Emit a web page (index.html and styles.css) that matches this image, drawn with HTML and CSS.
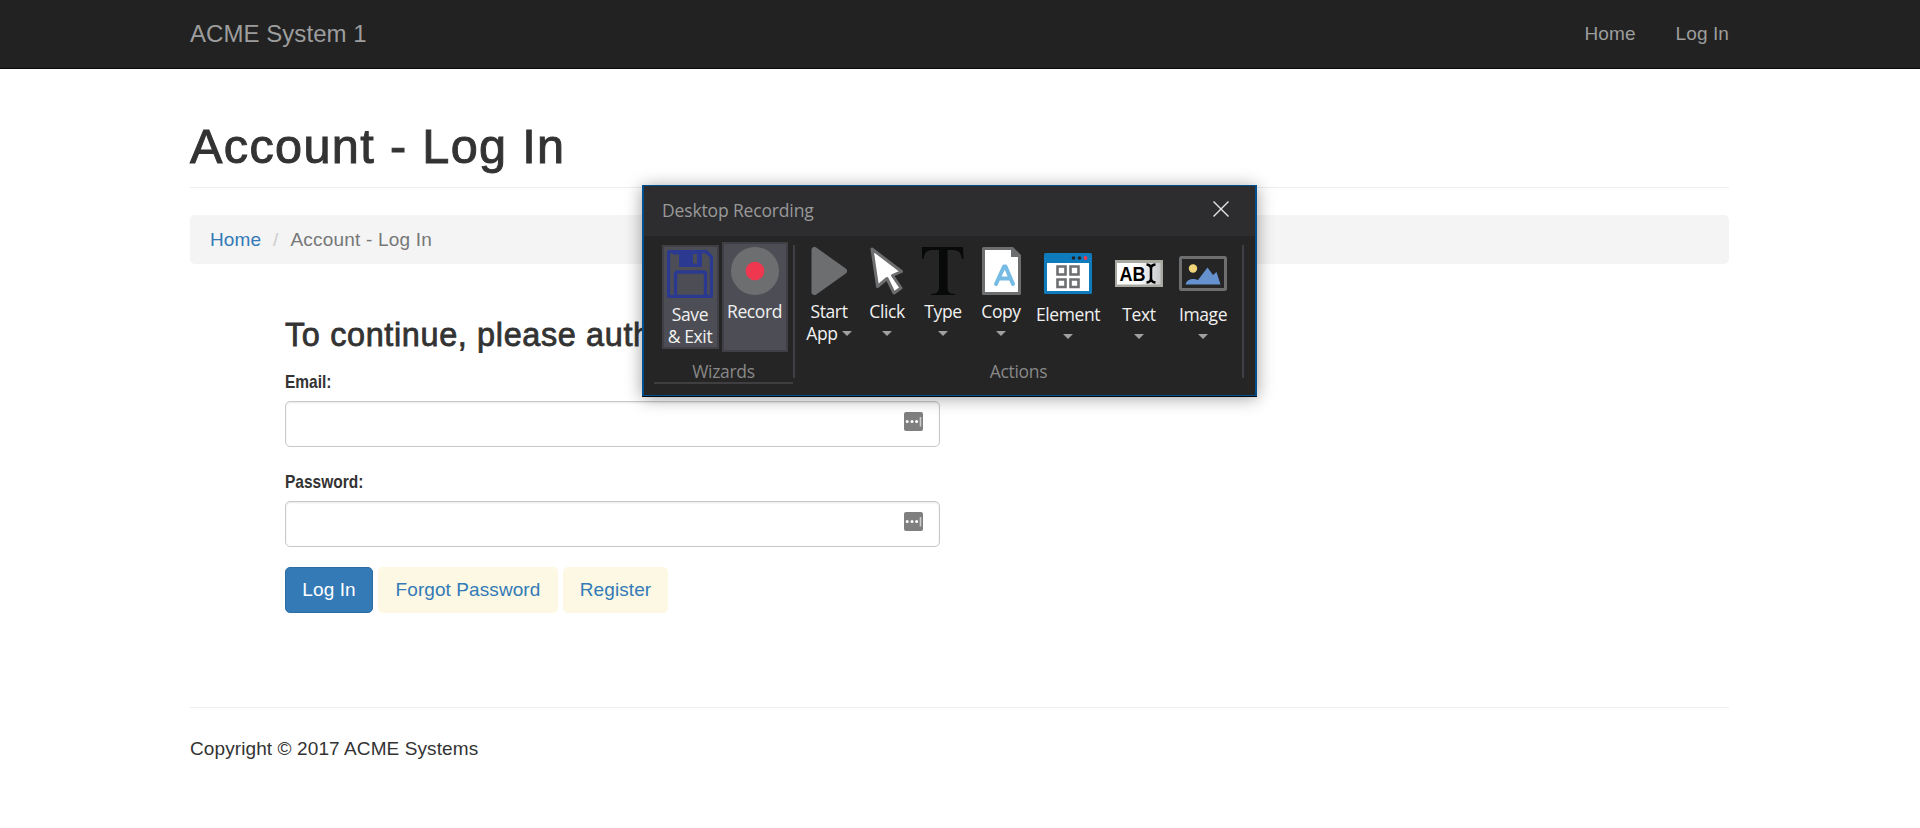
FILE: index.html
```html
<!DOCTYPE html>
<html lang="en">
<head>
<meta charset="utf-8">
<title>Account - Log In</title>
<link rel="stylesheet" href="styles.css">
</head>
<body>
<header class="navbar">
  <a class="brand">ACME System 1</a>
  <nav class="nav"><a>Home</a><a>Log In</a></nav>
</header>
<main class="container">
  <h1 class="page-title">Account - Log In</h1>
  <div class="breadcrumb"><a class="link">Home</a><span class="slash">/</span><span class="current">Account - Log In</span></div>
  <form class="login">
    <h3 class="prompt">To continue, please auth</h3>
    <label class="label">Email:</label>
    <div class="input"><svg class="key" width="19" height="19" viewBox="0 0 19 19"><rect width="19" height="19" rx="2" fill="#7f7f7f"/><g fill="#fff"><circle cx="3.2" cy="9.5" r="1.5"/><circle cx="8" cy="9.5" r="1.5"/><circle cx="12.6" cy="9.5" r="1.5"/></g><path d="M16.500 5v9.500" stroke="#ccc" stroke-width="1.600"/></svg></div>
    <label class="label second">Password:</label>
    <div class="input"><svg class="key" width="19" height="19" viewBox="0 0 19 19"><rect width="19" height="19" rx="2" fill="#7f7f7f"/><g fill="#fff"><circle cx="3.2" cy="9.5" r="1.5"/><circle cx="8" cy="9.5" r="1.5"/><circle cx="12.6" cy="9.5" r="1.5"/></g><path d="M16.500 5v9.500" stroke="#ccc" stroke-width="1.600"/></svg></div>
    <div class="buttons"><a class="btn primary">Log In</a><a class="btn forgot">Forgot Password</a><a class="btn register">Register</a></div>
  </form>
  <footer class="footer"><span>Copyright © 2017 ACME Systems</span></footer>
</main>

<section class="recorder">
  <div class="titlebar">
    <span class="title">Desktop Recording</span>
    <svg width="18" height="18" viewBox="0 0 18 18"><path d="M1.500 1.500l15 15M16.500 1.500l-15 15" stroke="#e6e6e6" stroke-width="1.400"/></svg>
  </div>
  <div class="ribbon">
    <div class="wizards">
      <div class="tiles">
        <div class="tile save">
          <svg width="46" height="48" viewBox="0 0 46 48"><path d="M3 1.500H39L44.500 7V45a1.500 1.500 0 0 1-1.500 1.500H3A1.500 1.500 0 0 1 1.500 45V3A1.500 1.500 0 0 1 3 1.500Z" fill="none" stroke="#2b3990" stroke-width="3.400"/><path d="M5 2h30v13.500a1.500 1.500 0 0 1-1.500 1.500h-20a1.500 1.500 0 0 1-1.500-1.500V4.500H6zM26 4v9.500h4V4z" fill="#2b3990" fill-rule="evenodd"/><path d="M8.500 46V24a2 2 0 0 1 2-2h26a2 2 0 0 1 2 2v22" fill="none" stroke="#2b3990" stroke-width="3.400"/></svg>
          <span>Save</span><span>&amp; Exit</span>
        </div>
        <div class="tile record">
          <svg width="48" height="48" viewBox="0 0 48 48"><circle cx="24" cy="24" r="24" fill="#6d6e70"/><circle cx="24" cy="24" r="9.300" fill="#ef3750"/></svg>
          <span>Record</span>
        </div>
      </div>
      <div class="group-name">Wizards</div>
    </div>
    <div class="divider"></div>
    <div class="actions">
      <div class="items">
        <div class="item start">
          <svg width="36" height="48" viewBox="0 0 36 48"><path d="M3.500 3V45L33 24Z" fill="#6d6e70" stroke="#6d6e70" stroke-width="6" stroke-linejoin="round"/></svg>
          <span>Start</span><span class="app">App<i class="caret"></i></span>
        </div>
        <div class="item click">
          <svg width="34" height="48" viewBox="0 0 34 48"><path d="M2 2L31.500 24.500L22.500 28.500L31 41L24 46L17 31.500L7.500 39.500Z" fill="#fff" stroke="#6d6e70" stroke-width="3" stroke-linejoin="round"/></svg>
          <span>Click</span><i class="caret"></i>
        </div>
        <div class="item type">
          <svg width="42" height="48" viewBox="0 0 42 48"><path d="M0 0H41L41.500 12H40C39 5 36 3 30 3H25.500V40C25.500 45 27 46.500 33 47V48H9V47C15 46.500 17 45 17 40V3H12C5 3 2.500 5 1.500 12H0Z" fill="#080909"/></svg>
          <span>Type</span><i class="caret"></i>
        </div>
        <div class="item copy">
          <svg width="39" height="48" viewBox="0 0 39 48"><path d="M1.500 0H31L39 8V46.500a1.500 1.500 0 0 1-1.500 1.500H1.500A1.500 1.500 0 0 1 0 46.500V1.500A1.500 1.500 0 0 1 1.500 0Z" fill="#6d6e70"/><path d="M3 3H29V10H36V45H3Z" fill="#fff"/><path d="M14 37L22 19.500H23.500L31 37M17 31.500H28" fill="none" stroke="#76bbe3" stroke-width="4" stroke-linecap="round" stroke-linejoin="round"/></svg>
          <span>Copy</span><i class="caret"></i>
        </div>
        <div class="item element low">
          <svg width="48" height="48" viewBox="0 0 48 48"><rect y="6" width="48" height="41" rx="1.500" fill="#0e7bbd"/><path d="M3 16H45V44H3Z" fill="#fff"/><circle cx="29.500" cy="11" r="1.800" fill="#252525"/><circle cx="35.500" cy="11" r="1.800" fill="#252525"/><circle cx="41.500" cy="11" r="1.900" fill="#ef3750"/><path d="M13.500 19.500h8v8h-8zM26.500 19.500h8v8h-8zM13.500 32.500h8v7.500h-8zM26.500 32.500h8v7.500h-8z" fill="#fff" stroke="#6d6e70" stroke-width="2.600"/></svg>
          <span>Element</span><i class="caret"></i>
        </div>
        <div class="item text low">
          <svg width="48" height="48" viewBox="0 0 48 48"><defs><linearGradient id="field"><stop offset=".45" stop-color="#fff"/><stop offset="1" stop-color="#c9c9cc"/></linearGradient></defs><rect y="13" width="48" height="27" fill="#a9a9a2"/><rect x="2" y="16" width="43.500" height="21.500" fill="url(#field)"/><text x="4.500" y="33.500" textLength="26" lengthAdjust="spacingAndGlyphs" class="ab">AB</text><path d="M31.500 17.500Q36 18 36 21.500Q36 18 40.500 17.500M36 20V32M31.500 35.500Q36 35 36 31.500Q36 35 40.500 35.500" fill="none" stroke="#000" stroke-width="2.500"/></svg>
          <span>Text</span><i class="caret"></i>
        </div>
        <div class="item image low">
          <svg width="48" height="48" viewBox="0 0 48 48"><rect x="1.500" y="10.500" width="45" height="32" rx="1" fill="#252525" stroke="#6d6e70" stroke-width="3"/><circle cx="14" cy="21.500" r="4.200" fill="#f0d679"/><path d="M6.500 37.500C8 32 14 31 19 33L28.500 20.500L34 28L37.500 25L41.500 37.500Z" fill="#6691cf"/></svg>
          <span>Image</span><i class="caret"></i>
        </div>
      </div>
      <div class="group-name">Actions</div>
    </div>
    <div class="divider"></div>
  </div>
</section>
</body>
</html>
```
FILE: styles.css
```css
* { box-sizing: border-box; }
body {
  margin: 0;
  height: 828px;
  overflow: hidden;
  background: #fff;
  color: #333;
  font: 19px/27px "Liberation Sans", Arial, sans-serif;
}
.navbar {
  height: 69px;
  padding: 0 191px 2px 190px;
  display: flex;
  align-items: center;
  justify-content: space-between;
  background: #222;
  border-bottom: 1px solid #080808;
  color: #9d9d9d;
}
.brand { font-size: 24px; letter-spacing: 0.05px; }
.nav { display: flex; gap: 40px; letter-spacing: 0.1px; }
.container { width: 1539px; margin-left: 190px; }
.page-title {
  margin: 50px 0 27px;
  padding-bottom: 14px;
  border-bottom: 1px solid #eee;
  font-size: 48.6px;
  line-height: 54px;
  font-weight: 400;
  letter-spacing: 1.35px;
  -webkit-text-stroke: 1px #333;
}
.breadcrumb {
  height: 49px;
  padding: 11px 20px;
  display: flex;
  background: #f4f4f4;
  border-radius: 5px;
  letter-spacing: 0.1px;
}
.link { color: #337ab7; }
.slash { margin: 0 12px; color: #ccc; }
.current { color: #777; letter-spacing: 0.2px; }
.login { width: 655px; margin: 53px 0 0 95px; }
.prompt {
  width: 358px;
  overflow: hidden;
  margin: 0 0 15px;
  font-size: 32.4px;
  line-height: 36px;
  font-weight: 400;
  letter-spacing: 0.65px;
  white-space: nowrap;
  -webkit-text-stroke: 0.8px #333;
}
.label {
  display: block;
  margin-bottom: 6px;
  font-weight: 700;
  transform: scaleX(0.815);
  transform-origin: 0 0;
}
.second { margin-top: 21px; }
.input {
  height: 46px;
  padding: 10px 16px;
  display: flex;
  justify-content: flex-end;
  border: 1px solid #c8c8c8;
  border-radius: 5px;
  box-shadow: inset 0 1px 2px rgba(0, 0, 0, 0.09);
}
.buttons { display: flex; gap: 5px; margin-top: 20px; }
.btn {
  height: 46px;
  padding-bottom: 2px;
  display: flex;
  align-items: center;
  justify-content: center;
  border-radius: 5px;
  background: #fcf8e3;
  color: #337ab7;
  letter-spacing: 0.08px;
}
.primary { width: 88px; background: #337ab7; border: 1px solid #2e6da4; color: #fff; }
.forgot { width: 180px; }
.register { width: 105px; }
.footer { margin-top: 94px; padding-top: 27px; border-top: 1px solid #eee; letter-spacing: 0.1px; }

.recorder {
  position: absolute;
  left: 642px;
  top: 185px;
  width: 615px;
  height: 211px;
  background: #252525;
  border: 2px solid #00508f;
  border-top-width: 1px;
  border-bottom-width: 1px;
  box-shadow: 0 1px 0 #05080c, 0 2px 16px rgba(0, 0, 0, 0.38);
  color: #f1f1f1;
  font: 17.5px/22px "Open Sans", "Noto Sans", sans-serif;
}
.titlebar {
  height: 50px;
  padding: 0 25px 2px 18px;
  display: flex;
  align-items: center;
  justify-content: space-between;
  background: #2d2d30;
}
.titlebar svg { margin-bottom: 2px; }
.title { color: #999; letter-spacing: -0.15px; }
.ribbon { display: flex; padding: 6px 0 0 10px; }
.wizards { width: 139px; height: 142px; border-bottom: 2px solid #3f3f42; }
.tiles { display: flex; gap: 3px; padding-left: 8px; height: 110px; }
.tile {
  display: flex;
  flex-direction: column;
  align-items: center;
  background: #4d4e55;
  border: 2px solid #3f3f45;
  white-space: nowrap;
  letter-spacing: -0.4px;
}
.save { width: 57px; height: 104px; margin-top: 3px; padding: 3px 1px 0 0; }
.save svg { margin-bottom: 5px; }
.record { width: 66px; height: 110px; padding: 3px 1px 0 0; }
.record svg { margin-bottom: 5px; }
.group-name { margin-top: 8px; text-align: center; color: #888; letter-spacing: -0.3px; }
.divider { width: 2px; height: 133px; margin-top: 3px; background: #3f3f46; }
.actions { width: 447px; }
.items { display: flex; height: 110px; padding: 5px 0 0 6px; }
.item {
  display: flex;
  flex-direction: column;
  align-items: center;
  letter-spacing: -0.4px;
}
.item svg { margin-bottom: 5px; flex: none; }
.low svg { margin-bottom: 8px; }
.caret {
  width: 0;
  height: 0;
  margin-top: 9px;
  border: 5px solid transparent;
  border-top-color: #a0a0a0;
  border-bottom: 0;
}
.app { display: flex; gap: 4px; }
.start { width: 56px; }
.click { width: 60px; }
.type { width: 52px; }
.copy { width: 64px; }
.element { width: 70px; }
.text { width: 72px; }
.image { width: 56px; }
.ab { font: 700 20px "Liberation Sans", Arial, sans-serif; letter-spacing: 0; fill: #000; }
```
